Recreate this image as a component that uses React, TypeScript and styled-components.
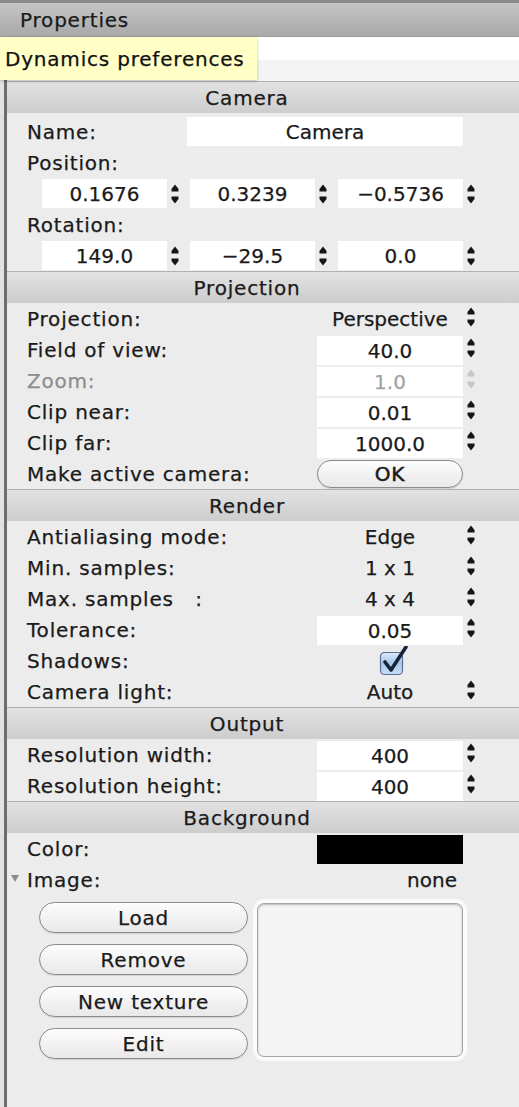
import React from "react";
import styled, { createGlobalStyle } from "styled-components";

const FONT = `"DejaVu Sans", "Liberation Sans", sans-serif`;

const Global = createGlobalStyle`
  html, body { margin: 0; padding: 0; background: #ececec; }
  body { font-family: ${FONT}; }
  * { box-sizing: border-box; }
`;

const Page = styled.div`
  position: relative;
  width: 519px;
  height: 1107px;
  overflow: hidden;
  background: #ececec;
  font-family: ${FONT};
  color: #1c1c1c;
  -webkit-text-stroke: 0.25px currentColor;
`;

const TitleBar = styled.div`
  height: 37px;
  border-top: 3px solid #8b8b8b;
  border-bottom: 1px solid #9c9c9c;
  background: linear-gradient(#c5c5c5, #a9a9a9);
  display: flex;
  align-items: center;
  padding-left: 20px;
  font-size: 20px;
  letter-spacing: 0.8px;
  color: #1a1a1a;
`;

const Frame = styled.div`
  height: calc(100% - 37px);
  border-left: 4px solid #e2e2e2;
`;

const Panel = styled.div`
  height: 100%;
  border-left: 3px solid #6d6d6d;
  display: flex;
  flex-direction: column;
`;

const SearchBand = styled.div`
  height: 23px;
  background: #ffffff;
`;

const LightBand = styled.div`
  height: 21px;
  background: #f3f3f3;
`;

const Header = styled.div`
  height: 32px;
  border-top: 1px solid #b2b2b2;
  background: linear-gradient(#e2e2e2, #cdcdcd);
  display: flex;
  align-items: center;
  justify-content: center;
  padding-right: 32px;
  font-size: 20px;
  letter-spacing: 0.8px;
  color: #1a1a1a;
`;

const PropRow = styled.div`
  display: grid;
  grid-template-columns: 310px 146px auto;
  height: 31px;
  align-items: center;
`;

const NameRow = styled.div`
  display: grid;
  grid-template-columns: 180px 276px;
  height: 31px;
  margin-top: 3px;
  align-items: center;
`;

const LabelRow = styled.div`
  display: flex;
  height: 31px;
  align-items: center;
`;

const TripleRow = styled.div`
  display: grid;
  grid-template-columns: repeat(3, 125px 23px);
  height: 31px;
  padding-left: 35px;
  align-items: center;
`;

const Label = styled.span<{ $muted?: boolean }>`
  display: flex;
  align-items: center;
  padding-left: 20px;
  font-size: 20px;
  letter-spacing: 0.8px;
  white-space: pre;
  color: ${(p) => (p.$muted ? "#8d8d8d" : "#1a1a1a")};
`;

const Field = styled.div<{ $muted?: boolean; $end?: boolean }>`
  height: 29px;
  align-self: ${(p) => (p.$end ? "end" : "center")};
  background: #ffffff;
  display: flex;
  align-items: center;
  justify-content: center;
  font-size: 20px;
  color: ${(p) => (p.$muted ? "#a3a3a3" : "#1a1a1a")};
`;

const Swatch = styled.div<{ $color: string }>`
  height: 29px;
  align-self: end;
  background: ${(p) => p.$color};
`;

const Value = styled.div<{ $align?: "center" | "right" }>`
  display: flex;
  justify-content: ${(p) => (p.$align === "right" ? "flex-end" : "center")};
  padding-right: ${(p) => (p.$align === "right" ? "6px" : "0")};
  font-size: 20px;
  color: #1a1a1a;
`;

const SpinSvg = styled.svg<{ $lift?: boolean }>`
  display: block;
  margin: 0 0 ${(p) => (p.$lift ? "4px" : "0")} 4px;
`;

const Spinner = ({ muted, lift }: { muted?: boolean; lift?: boolean }) => {
  const c = muted ? "#c6c6c6" : "#151515";
  return (
    <SpinSvg $lift={lift} width="8" height="20" viewBox="0 0 8 20" aria-hidden>
      <polygon points="4,0.5 7.5,5 7.5,7.5 0.5,7.5 0.5,5" fill={c} />
      <polygon points="0.5,12.5 7.5,12.5 7.5,15 4,19.5 0.5,15" fill={c} />
    </SpinSvg>
  );
};

const PillButton = styled.button<{ $height?: number }>`
  height: ${(p) => p.$height ?? 31}px;
  border: 1px solid #8a8a8a;
  border-radius: 16px;
  background: linear-gradient(#fdfdfd, #f1f1f1 55%, #e9e9e9);
  box-shadow: 0 1px 1px rgba(0, 0, 0, 0.12);
  font-family: ${FONT};
  font-size: 20px;
  letter-spacing: 0.8px;
  color: #1a1a1a;
  -webkit-text-stroke: 0.25px currentColor;
  padding: 0;
  display: flex;
  align-items: center;
  justify-content: center;
`;

const OkButton = styled(PillButton)`
  align-self: end;
  margin-bottom: 1px;
  -webkit-text-stroke: 0.5px currentColor;
`;

const CheckCell = styled.div`
  display: flex;
  justify-content: center;
  padding-left: 5px;
`;

const Disclosure = styled.span`
  width: 0;
  height: 0;
  border-left: 4px solid transparent;
  border-right: 4px solid transparent;
  border-top: 7px solid #8c8c8c;
  margin: 0 8px 3px -16px;
`;

const Bottom = styled.div`
  display: grid;
  grid-template-columns: 209px 206px;
  column-gap: 9px;
  padding: 7px 0 0 32px;
  align-items: start;
`;

const ButtonStack = styled.div`
  display: flex;
  flex-direction: column;
  gap: 11px;
`;

const ImageWell = styled.div`
  margin-top: 1px;
  height: 154px;
  border: 1px solid #a4a4a4;
  border-radius: 7px;
  background: #f4f4f4;
  box-shadow: 0 0 0 4px #fbfbfb, inset 0 1px 2px rgba(0, 0, 0, 0.25);
`;

const Tooltip = styled.div`
  position: absolute;
  top: 37px;
  left: 0;
  width: 257px;
  height: 43px;
  background: #ffffc6;
  box-shadow: 0 1px 3px rgba(0, 0, 0, 0.25);
  display: flex;
  align-items: center;
  padding-left: 5px;
  font-size: 20px;
  letter-spacing: 0.8px;
  color: #111;
`;

const Checkbox = () => (
  <svg width="32" height="30" viewBox="0 0 32 30" aria-hidden>
    <defs>
      <linearGradient id="cbg" x1="0" y1="0" x2="0" y2="1">
        <stop offset="0" stopColor="#dbe9fb" />
        <stop offset="0.5" stopColor="#a9c7ee" />
        <stop offset="1" stopColor="#c9ddf7" />
      </linearGradient>
    </defs>
    <rect x="3.5" y="6.5" width="22" height="22" rx="4" fill="url(#cbg)" stroke="#5c6f8e" strokeWidth="1.2" />
    <path d="M8 16 L14 24 L29 1" fill="none" stroke="#16243a" strokeWidth="3.6" strokeLinecap="round" strokeLinejoin="round" />
  </svg>
);

type SimpleRow = {
  label: string;
  kind: "field" | "value";
  value: string;
  muted?: boolean;
};

const projectionRows: SimpleRow[] = [
  { label: "Projection:", kind: "value", value: "Perspective" },
  { label: "Field of view:", kind: "field", value: "40.0" },
  { label: "Zoom:", kind: "field", value: "1.0", muted: true },
  { label: "Clip near:", kind: "field", value: "0.01" },
  { label: "Clip far:", kind: "field", value: "1000.0" },
];

const renderRowsA: SimpleRow[] = [
  { label: "Antialiasing mode:", kind: "value", value: "Edge" },
  { label: "Min. samples:", kind: "value", value: "1 x 1" },
  { label: "Max. samples   :", kind: "value", value: "4 x 4" },
  { label: "Tolerance:", kind: "field", value: "0.05" },
];

const outputRows: SimpleRow[] = [
  { label: "Resolution width:", kind: "field", value: "400" },
  { label: "Resolution height:", kind: "field", value: "400" },
];

const Simple = ({ row }: { row: SimpleRow }) => (
  <PropRow>
    <Label $muted={row.muted}>{row.label}</Label>
    {row.kind === "field" ? (
      <Field $end $muted={row.muted}>{row.value}</Field>
    ) : (
      <Value>{row.value}</Value>
    )}
    <Spinner muted={row.muted} lift />
  </PropRow>
);

const Triple = ({ values }: { values: string[] }) => (
  <TripleRow>
    {values.map((v, i) => (
      <React.Fragment key={i}>
        <Field>{v}</Field>
        <Spinner />
      </React.Fragment>
    ))}
  </TripleRow>
);

export default function App() {
  return (
    <Page>
      <Global />
      <TitleBar>Properties</TitleBar>
      <Frame>
        <Panel>
          <SearchBand />
          <LightBand />

          <Header>Camera</Header>
          <NameRow>
            <Label>Name:</Label>
            <Field>Camera</Field>
          </NameRow>
          <LabelRow>
            <Label>Position:</Label>
          </LabelRow>
          <Triple values={["0.1676", "0.3239", "\u22120.5736"]} />
          <LabelRow>
            <Label>Rotation:</Label>
          </LabelRow>
          <Triple values={["149.0", "\u221229.5", "0.0"]} />

          <Header>Projection</Header>
          {projectionRows.map((r) => (
            <Simple key={r.label} row={r} />
          ))}
          <PropRow>
            <Label>Make active camera:</Label>
            <OkButton $height={28}>OK</OkButton>
          </PropRow>

          <Header>Render</Header>
          {renderRowsA.map((r) => (
            <Simple key={r.label} row={r} />
          ))}
          <PropRow>
            <Label>Shadows:</Label>
            <CheckCell>
              <Checkbox />
            </CheckCell>
          </PropRow>
          <Simple row={{ label: "Camera light:", kind: "value", value: "Auto" }} />

          <Header>Output</Header>
          {outputRows.map((r) => (
            <Simple key={r.label} row={r} />
          ))}

          <Header>Background</Header>
          <PropRow>
            <Label>Color:</Label>
            <Swatch $color="#000000" />
          </PropRow>
          <PropRow>
            <Label>
              <Disclosure />
              Image:
            </Label>
            <Value $align="right">none</Value>
          </PropRow>
          <Bottom>
            <ButtonStack>
              <PillButton>Load</PillButton>
              <PillButton>Remove</PillButton>
              <PillButton>New texture</PillButton>
              <PillButton>Edit</PillButton>
            </ButtonStack>
            <ImageWell />
          </Bottom>
        </Panel>
      </Frame>
      <Tooltip>Dynamics preferences</Tooltip>
    </Page>
  );
}
